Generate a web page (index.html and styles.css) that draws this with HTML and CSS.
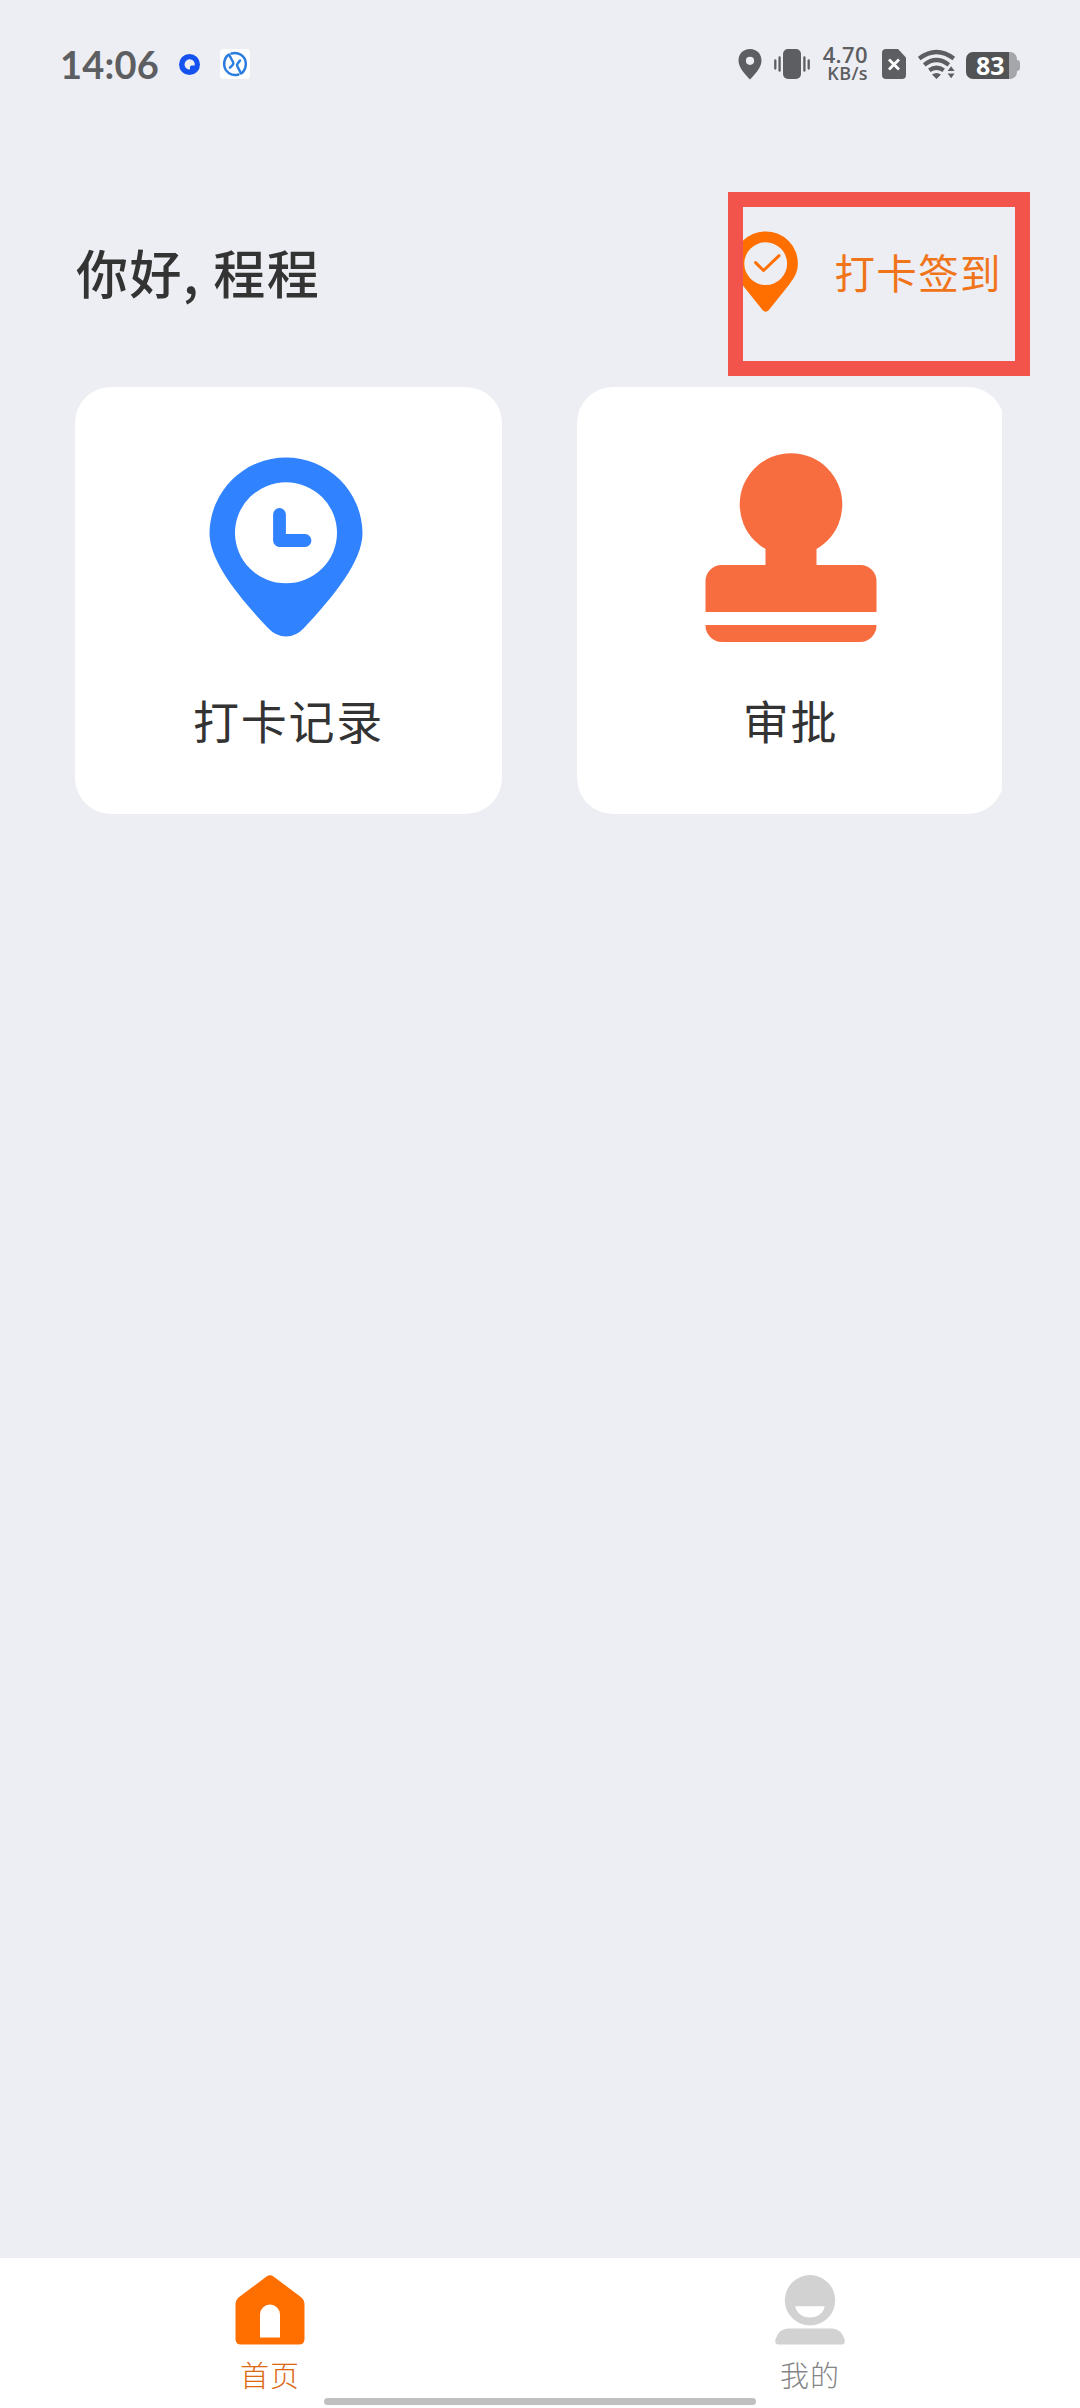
FILE: index.html
```html
<!DOCTYPE html>
<html lang="zh-CN">
<head>
<meta charset="utf-8">
<title>首页</title>
<link rel="stylesheet" href="styles.css">
</head>
<body>
<div class="app">
  <header class="status">
    <span class="time">14:06</span>
    <svg class="app-dot" width="21" height="21" viewBox="0 0 21 21"><circle cx="10.5" cy="10.5" r="10.5" fill="#1552f0"/><path d="M10.500 5.200A5.200 5.200 0 1 0 11 15.600V13.200Q11 11.500 12.700 11.500H15.700A5.200 5.200 0 0 0 10.500 5.200Z" fill="#edeef3"/></svg>
    <svg class="app-ball" width="30" height="30" viewBox="0 0 30 30"><rect width="30" height="30" rx="4" fill="#fff"/><g fill="none" stroke="#2b7de0" stroke-width="2.500" stroke-linecap="round" stroke-linejoin="round"><path d="M11.500 4.500A11 11 0 0 1 25.800 14Q26 20 22.500 23.500L21 24.500L17.500 17.500Q16.500 16 17.500 14.800L20 11.500"/><path d="M18.500 25.500A11 11 0 0 1 4.200 16Q4 10 7.500 6.500L9 5.500L13 13Q13.700 14.500 12.700 15.800L10 18.700"/></g></svg>
    <div class="status-icons">
      <svg width="24" height="31" viewBox="0 0 24 31"><path fill="#5d5e61" fill-rule="evenodd" d="M12 0C5 0 .5 5 .5 11.5C.5 19 7 25 12 30.5C17 25 23.5 19 23.5 11.5C23.5 5 19 0 12 0ZM12 7.7a4.100 4.100 0 1 1 0 8.200a4.100 4.100 0 0 1 0-8.200Z"/></svg>
      <svg class="vibrate" width="36" height="30" viewBox="0 0 36 30"><rect x="9" width="18" height="30" rx="5" fill="#5d5e61"/><path d="M1.3 11.5v8M5.6 8.3v13.4M30.4 8.3v13.4M34.7 11.5v8" stroke="#5d5e61" stroke-width="2.3" stroke-linecap="round"/></svg>
      <div class="speed"><span>4.70</span><span class="unit">KB/s</span></div>
      <svg class="sim" width="24" height="30" viewBox="0 0 24 30"><path d="M4 0H16L24 8.5V26Q24 30 20 30H4Q0 30 0 26V4Q0 0 4 0Z" fill="#5d5e61"/><path d="M7 10.500L17 20.500M17 10.500L7 20.500" stroke="#fff" stroke-width="2.8"/></svg>
      <svg class="wifi" width="38" height="30" viewBox="0 0 38 30"><g fill="none" stroke="#5d5e61" stroke-width="4.200"><path d="M1.200 9.500Q18.500-3.500 35.800 9.500"/><path d="M6.200 15.800Q18.500 6.200 30.800 15.800"/><path d="M11.300 21.300Q18.500 16.200 25.700 21.300"/></g><path d="M14 25.500Q18.500 22.500 23 25.500L18.500 30ZM29.600 22L33.100 17.300L36.600 22ZM29.600 24.500H36.600L33.100 29.300Z" fill="#5d5e61"/></svg>
      <div class="battery"><span class="level">83</span><i class="rest"></i><i class="cap"></i></div>
    </div>
  </header>

  <section class="greeting-row">
    <h1 class="greeting">你好, 程程</h1>
    <div class="checkin">
      <svg width="66" height="82" viewBox="0 0 66 82"><path fill="#ff6f00" fill-rule="evenodd" d="M33 0A32.500 32.500 0 0 0 .5 32.500C.5 42 5 48 11 56L30 79.500Q33 82.500 36 79.500L55 56C61 48 65.500 42 65.500 32.500A32.500 32.500 0 0 0 33 0ZM33 11a21.600 21.600 0 1 1 0 43.200a21.600 21.600 0 0 1 0-43.200Z"/><path d="M22.800 31.500L30.800 39.500L46.500 24.500" fill="none" stroke="#ff6f00" stroke-width="3" stroke-linecap="round" stroke-linejoin="round"/></svg>
      <span class="checkin-text">打卡签到</span>
      <div class="highlight"></div>
    </div>
  </section>

  <main class="cards">
    <article class="card">
      <svg class="card-icon" width="172" height="190" viewBox="3 0 172 190"><path fill="#3082ff" fill-rule="evenodd" d="M86 4.500A76.500 76.500 0 0 0 9.500 80C9.500 108 38 143 68 175Q76 183.500 86 183.500T104 175C134 143 162.500 108 162.500 80A76.500 76.500 0 0 0 86 4.500ZM86 29.300a51 50.500 0 1 1 0 101a51 50.500 0 0 1 0-101Z"/><path d="M79.500 61.500V87.500H105" fill="none" stroke="#3082ff" stroke-width="12.800" stroke-linecap="round" stroke-linejoin="round"/></svg>
      <span class="card-label">打卡记录</span>
    </article>
    <article class="card">
      <svg class="card-icon" width="172" height="190" viewBox="0 0 172 190"><g fill="#f76d3f"><circle cx="86" cy="51.500" r="51.300"/><path d="M60.500 80H111.500V112H155.500A16 16 0 0 1 171.500 128V159H.500V128A16 16 0 0 1 16.500 112H60.500ZM.500 172H171.500A16.500 16.500 0 0 1 155 189H17A16.500 16.500 0 0 1 .500 172Z"/></g></svg>
      <span class="card-label">审批</span>
    </article>
  </main>

  <nav class="tabs">
    <a class="tab active">
      <svg width="70" height="70" viewBox="0 0 70 70"><path fill="#ff6f00" fill-rule="evenodd" d="M31.500 1.500Q35-1 38.500 1.500L66.500 22.500Q69.500 25 69.500 28.500V64Q69.500 69.500 64 69.500H6Q.500 69.500.500 64V28.500Q.500 25 3.500 22.500ZM25 62.500H45V39.500A10 10 0 0 0 25 39.500Z"/></svg>
      <span>首页</span>
    </a>
    <a class="tab">
      <svg width="70" height="70" viewBox="0 0 70 70"><g fill="#d2d2d2"><circle cx="35" cy="25.300" r="25.200"/><path d="M13 53.500H57Q66 53.500 69.500 64Q70.500 69.500 67 69.500H3Q-.500 69.500.500 64Q4 53.500 13 53.500Z"/></g><path d="M20.200 31.300H49.700C48.500 38 43 42.500 35 42.500S21.500 38 20.200 31.300Z" fill="#fff"/></svg>
      <span>我的</span>
    </a>
    <div class="home-indicator"></div>
  </nav>
</div>
</body>
</html>
```

FILE: styles.css
```css
* { box-sizing: border-box; }

body {
  margin: 0;
  background: #edeef3;
  font-family: "Noto Sans CJK SC", sans-serif;
  color: #333;
}

.app {
  display: flex;
  flex-direction: column;
  width: 1080px;
  height: 2408px;
}

/* Status bar */
.status {
  display: flex;
  align-items: center;
  height: 128px;
  padding: 0 60px;
  color: #5d5e61;
}

.time {
  width: 119px;
  font: 700 38px/40px Lato, sans-serif;
  letter-spacing: 0.2px;
}

.app-ball { margin-left: 20px; }

.status-icons {
  display: flex;
  align-items: center;
  margin-left: auto;
}

.vibrate { margin-left: 12px; }

.speed {
  display: flex;
  flex-direction: column;
  width: 47px;
  margin-left: 11px;
  font: 600 22px/19px "Open Sans", sans-serif;
  letter-spacing: 0.4px;
  text-align: right;
  white-space: nowrap;
}

.speed .unit {
  font-size: 18px;
  line-height: 19px;
}

.sim { margin-left: 14px; }
.wifi { margin-left: 12px; }

.battery {
  display: flex;
  align-items: center;
  margin: 2px 0 0 10px;
}

.level {
  width: 43px;
  height: 27px;
  padding-left: 10px;
  border-radius: 7px 0 0 7px;
  background: #525355;
  color: #fff;
  font: 700 25px/27px "Noto Sans", sans-serif;
}

.rest {
  width: 8px;
  height: 27px;
  border-radius: 0 7px 7px 0;
  background: #a5a6a9;
}

.cap {
  width: 3px;
  height: 11px;
  border-radius: 0 3px 3px 0;
  background: #a5a6a9;
}

/* Greeting and check-in */
.greeting-row {
  display: flex;
  justify-content: space-between;
  height: 259px;
  padding: 103px 78px 0 76px;
}

.greeting {
  margin: 0;
  font-size: 52px;
  font-weight: 500;
  line-height: 81px;
  letter-spacing: 1.5px;
}

.checkin {
  position: relative;
  display: flex;
  width: 269px;
  height: 82px;
}

.checkin-text {
  margin-left: 36px;
  color: #f0741a;
  font-size: 40.5px;
  line-height: 82px;
  letter-spacing: 1.4px;
  white-space: nowrap;
}

.highlight {
  position: absolute;
  top: -39px;
  left: -5px;
  width: 302px;
  height: 184px;
  border: 15px solid #f2544c;
}

/* Cards */
.cards {
  display: grid;
  grid-template-columns: 427px 427px;
  gap: 75px;
  width: 927px;
  margin-left: 75px;
  overflow: hidden;
}

.card {
  display: flex;
  flex-direction: column;
  align-items: center;
  height: 427px;
  padding-top: 66px;
  border-radius: 36px;
  background: #fff;
}

.card:first-child .card-icon { margin-right: -1px; }

.card-icon { flex: none; }

.card-label {
  margin-top: 42px;
  font-size: 46px;
  line-height: 68px;
  letter-spacing: 1.8px;
}

/* Bottom navigation */
.tabs {
  position: relative;
  display: flex;
  height: 150px;
  margin-top: auto;
  background: #fff;
}

.tab {
  display: flex;
  flex: 1;
  flex-direction: column;
  align-items: center;
  padding-top: 17px;
  color: #858585;
  font-size: 29px;
  font-weight: 300;
  line-height: 42px;
}

.tab span { margin-top: 8px; letter-spacing: 1px; }
.tab.active { color: #dc6812; }

.home-indicator {
  position: absolute;
  bottom: 3px;
  left: 324px;
  width: 432px;
  height: 7px;
  border-radius: 4px;
  background: #c0c0c0;
}
```
